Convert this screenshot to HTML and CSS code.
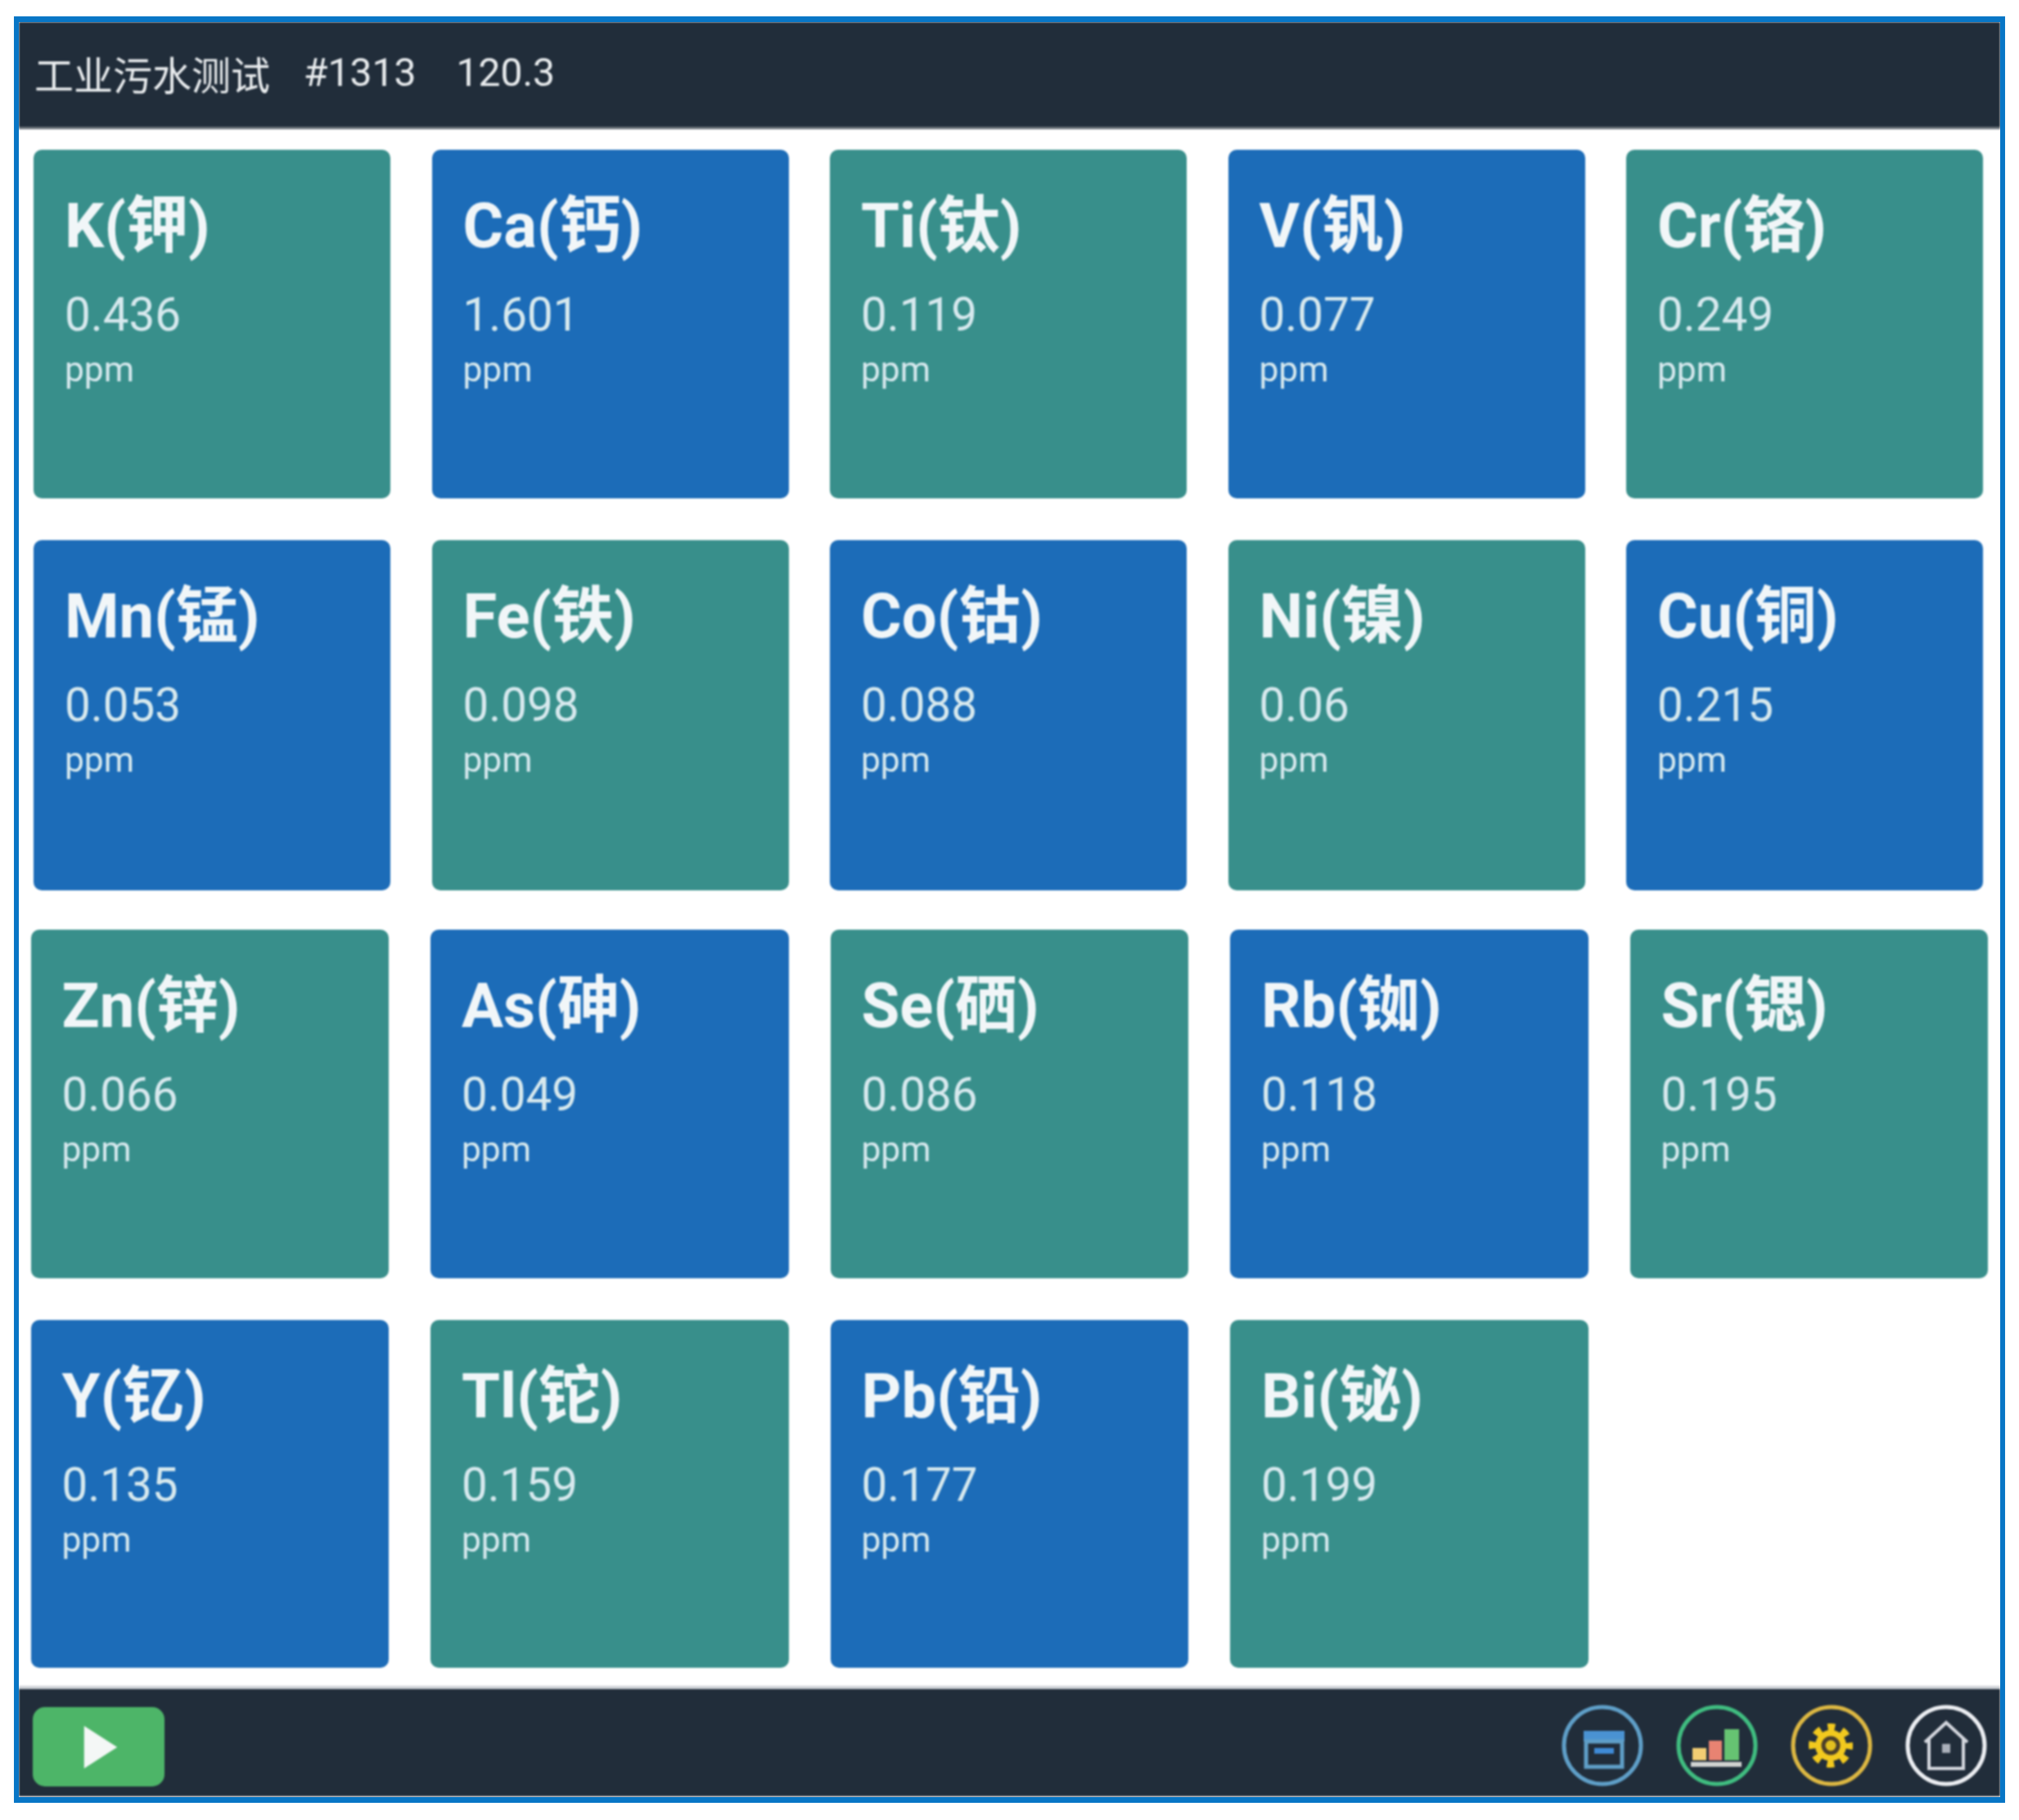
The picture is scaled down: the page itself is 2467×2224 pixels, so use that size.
FILE: index.html
```html
<!DOCTYPE html>
<html lang="zh">
<head>
<meta charset="utf-8">
<title>工业污水测试</title>
<link rel="stylesheet" href="styles.css">
</head>
<body>
<div class="frame">
  <div class="screen">
    <header class="topbar">
      <span>工业污水测试</span>
      <span class="code">#1313</span>
      <span class="reading">120.3</span>
    </header>
    <main class="content">
      <section class="row wide row-1">
        <article class="card teal"><h2>K(钾)</h2><p class="value">0.436</p><p class="unit">ppm</p></article>
        <article class="card blue"><h2>Ca(钙)</h2><p class="value">1.601</p><p class="unit">ppm</p></article>
        <article class="card teal"><h2>Ti(钛)</h2><p class="value">0.119</p><p class="unit">ppm</p></article>
        <article class="card blue"><h2>V(钒)</h2><p class="value">0.077</p><p class="unit">ppm</p></article>
        <article class="card teal"><h2>Cr(铬)</h2><p class="value">0.249</p><p class="unit">ppm</p></article>
      </section>
      <section class="row wide row-2">
        <article class="card blue"><h2>Mn(锰)</h2><p class="value">0.053</p><p class="unit">ppm</p></article>
        <article class="card teal"><h2>Fe(铁)</h2><p class="value">0.098</p><p class="unit">ppm</p></article>
        <article class="card blue"><h2>Co(钴)</h2><p class="value">0.088</p><p class="unit">ppm</p></article>
        <article class="card teal"><h2>Ni(镍)</h2><p class="value">0.06</p><p class="unit">ppm</p></article>
        <article class="card blue"><h2>Cu(铜)</h2><p class="value">0.215</p><p class="unit">ppm</p></article>
      </section>
      <section class="row spread row-3">
        <article class="card teal"><h2>Zn(锌)</h2><p class="value">0.066</p><p class="unit">ppm</p></article>
        <article class="card blue"><h2>As(砷)</h2><p class="value">0.049</p><p class="unit">ppm</p></article>
        <article class="card teal"><h2>Se(硒)</h2><p class="value">0.086</p><p class="unit">ppm</p></article>
        <article class="card blue"><h2>Rb(铷)</h2><p class="value">0.118</p><p class="unit">ppm</p></article>
        <article class="card teal"><h2>Sr(锶)</h2><p class="value">0.195</p><p class="unit">ppm</p></article>
      </section>
      <section class="row spread row-4">
        <article class="card blue"><h2>Y(钇)</h2><p class="value">0.135</p><p class="unit">ppm</p></article>
        <article class="card teal"><h2>Tl(铊)</h2><p class="value">0.159</p><p class="unit">ppm</p></article>
        <article class="card blue"><h2>Pb(铅)</h2><p class="value">0.177</p><p class="unit">ppm</p></article>
        <article class="card teal"><h2>Bi(铋)</h2><p class="value">0.199</p><p class="unit">ppm</p></article>
      </section>
    </main>
    <footer class="bottombar">
      <button class="play" type="button" aria-label="开始">
        <svg class="play-icon" viewBox="0 0 42 54"><polygon points="0,0 42,27 0,54"/></svg>
      </button>
      <nav class="tools">
        <svg class="tool" viewBox="0 0 100 100" aria-label="存档">
          <circle cx="50" cy="50" r="47" fill="none" stroke="#5f9fc8" stroke-width="5"/>
          <rect x="27" y="32" width="50" height="13" fill="#4a92d2"/>
          <rect x="30" y="45" width="44" height="31" fill="none" stroke="#5f9fc8" stroke-width="5"/>
          <rect x="40" y="53" width="24" height="7" fill="#3f8bd6"/>
        </svg>
        <svg class="tool" viewBox="0 0 100 100" aria-label="图表">
          <circle cx="50" cy="50" r="47" fill="none" stroke="#40bd80" stroke-width="5"/>
          <rect x="20" y="53" width="17" height="15" fill="#f2cd73"/>
          <rect x="40" y="44" width="16" height="24" fill="#e88372"/>
          <rect x="59" y="30" width="18" height="38" fill="#66c372"/>
          <rect x="18" y="70" width="62" height="6" fill="#d0d2d0"/>
        </svg>
        <svg class="tool" viewBox="0 0 100 100" aria-label="设置">
          <circle cx="50" cy="50" r="47" fill="none" stroke="#dcb742" stroke-width="5"/>
          <circle cx="49" cy="50" r="22" fill="none" stroke="#f2c91e" stroke-width="10" stroke-dasharray="8.64 8.64" stroke-dashoffset="4.32"/>
          <circle cx="49" cy="50" r="19" fill="#f2c91e"/>
          <circle cx="49" cy="50" r="9" fill="#e2c020" stroke="#4a3f2a" stroke-width="5"/>
        </svg>
        <svg class="tool" viewBox="0 0 100 100" aria-label="主页">
          <circle cx="50" cy="50" r="47" fill="none" stroke="#eceef2" stroke-width="5"/>
          <path d="M24 46 L50 22 L76 46 M29 42 V78 H71 V42" fill="none" stroke="#d4d7de" stroke-width="4"/>
          <rect x="45" y="48" width="10" height="11" fill="#aab0ba"/>
        </svg>
      </nav>
    </footer>
  </div>
</div>
</body>
</html>
```
FILE: styles.css
```css
* { box-sizing: border-box; }
html, body { margin: 0; padding: 0; background: #fff; }
body { font-family: Roboto, "Noto Sans CJK SC", sans-serif; }

.frame {
  width: 2433px;
  height: 2183px;
  margin: 20px 0 0 17px;
  border-style: solid;
  border-color: #0876c6;
  border-width: 7px 6px;
  overflow: hidden;
}
.screen {
  height: 100%;
  display: flex;
  flex-direction: column;
  background: #fff;
  filter: blur(1px);
}

.topbar {
  height: 131px;
  flex: none;
  display: flex;
  align-items: center;
  padding: 0 0 5px 19px;
  background: #212d3a;
  border-bottom: 3px solid #6f767e;
  color: #e9ecee;
  font-size: 48px;
}
.code { margin-left: 41px; }
.reading { margin-left: 49px; }

.content { flex: 1; padding-top: 25px; }
.row { display: grid; }
.wide { padding-left: 18px; grid-template-columns: repeat(5, 436px); column-gap: 50.5px; }
.spread { padding-left: 14.5px; grid-template-columns: repeat(5, 437.5px); column-gap: 51px; }
.row-1 { height: 426px; }
.row-2 { height: 428px; margin-top: 51px; }
.row-3 { height: 426px; margin-top: 48px; }
.row-4 { height: 425px; margin-top: 51px; }

.card {
  border-radius: 10px;
  padding: 49px 0 0 38px;
  color: #d7e9ee;
}
.teal { background: #388f8b; }
.blue { background: #1c6cb8; }
.card h2 {
  margin: 0;
  font-size: 76px;
  line-height: 88px;
  font-weight: 700;
  color: #f1f6f8;
}
.value {
  margin: 30px 0 0;
  font-size: 56.5px;
  line-height: 70px;
}
.unit {
  margin: 7px 0 0;
  font-size: 42.5px;
  line-height: 50px;
}

.bottombar {
  height: 136px;
  flex: none;
  display: flex;
  justify-content: space-between;
  align-items: flex-start;
  padding: 19px 16px 0 17px;
  background: #212d3a;
  border-top: 4px solid #d0d3d8;
  border-bottom: 1px solid #fff;
}
.play {
  width: 161px;
  height: 97px;
  margin-top: 3px;
  padding: 0 0 0 5px;
  border: 0;
  border-radius: 15px;
  background: #4db568;
  display: flex;
  align-items: center;
  justify-content: center;
}
.play-icon { width: 42px; height: 52px; fill: #f4f7f6; }
.tools { display: flex; gap: 40px; }
.tool { width: 100px; height: 100px; display: block; }
```
